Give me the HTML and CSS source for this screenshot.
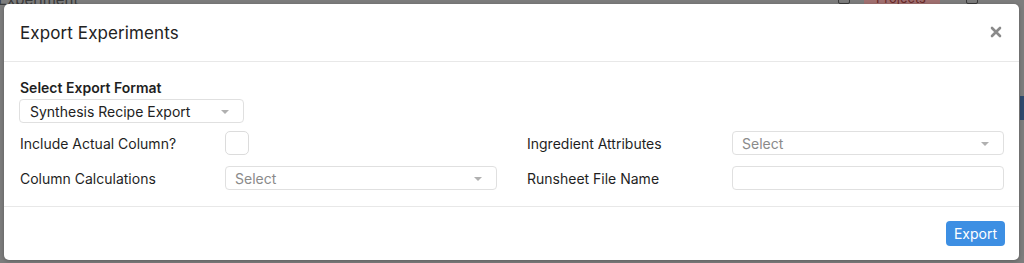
FILE: index.html
```html
<!DOCTYPE html>
<html lang="en">
<head>
    <meta charset="UTF-8">
    <title>Export Experiments</title>
    <link rel="stylesheet" href="styles.css">
</head>
<body>
    <!-- page behind the overlay -->
    <div class="page-bar">
        <span class="page-title">Experiment</span>
        <span class="page-icon icon-a"></span>
        <span class="page-badge">Projects</span>
        <span class="page-icon icon-b"></span>
    </div>
    <div class="page-strip"></div>

    <div class="overlay">
        <div class="modal">
            <div class="modal-header">
                <div class="modal-title">Export Experiments</div>
                <div class="modal-close">
                    <svg width="12" height="12" viewBox="0 0 12 12">
                        <path d="M2 2 L10 10 M10 2 L2 10" stroke="#8a8a8a" stroke-width="2.6" stroke-linecap="round"/>
                    </svg>
                </div>
            </div>

            <div class="modal-body">
                <div class="section-label">Select Export Format</div>
                <div class="select format-select">
                    <span class="select-value">Synthesis Recipe Export</span>
                    <span class="caret"></span>
                </div>

                <div class="form-grid">
                    <div class="form-row">
                        <div class="form-label">Include Actual Column?</div>
                        <div class="checkbox"></div>
                    </div>
                    <div class="form-row">
                        <div class="form-label">Ingredient Attributes</div>
                        <div class="select wide">
                            <span class="placeholder">Select</span>
                            <span class="caret"></span>
                        </div>
                    </div>
                    <div class="form-row">
                        <div class="form-label">Column Calculations</div>
                        <div class="select wide">
                            <span class="placeholder">Select</span>
                            <span class="caret"></span>
                        </div>
                    </div>
                    <div class="form-row">
                        <div class="form-label">Runsheet File Name</div>
                        <input class="text-input wide" type="text">
                    </div>
                </div>
            </div>

            <div class="modal-footer">
                <button class="export-button">Export</button>
            </div>
        </div>
    </div>
</body>
</html>
```

FILE: styles.css
```css
body {
    margin: 0;
    height: 263px;
    overflow: hidden;
    background-color: #7d7d7d;
    font-family: Inter, "Noto Sans", sans-serif;
    color: #1f1f1f;
    position: relative;
}

/* Page behind the modal (dimmed) */
.page-bar {
    position: absolute;
    top: -10px;
    left: 0;
    right: 0;
    height: 16px;
    font-size: 15px;
}
.page-title {
    position: absolute;
    left: -2px;
    top: 0;
    color: #3a3a3a;
}
.page-badge {
    position: absolute;
    left: 864px;
    top: 0;
    width: 76px;
    padding-left: 12px;
    box-sizing: border-box;
    background-color: #a07070;
    color: #6a2a2a;
    font-size: 13px;
    border-radius: 3px;
}
.page-icon {
    position: absolute;
    top: 2px;
    width: 10px;
    height: 10px;
    border: 1.5px solid #3a3a3a;
    border-radius: 2px;
}
.icon-a {
    left: 838px;
}
.icon-b {
    left: 966px;
}
.page-strip {
    position: absolute;
    left: 1020px;
    top: 96px;
    width: 10px;
    height: 24px;
    background-color: #304a6e;
}

.overlay {
    position: relative;
    padding: 4px 5px 0 4px;
}

.modal {
    background-color: #fff;
    border-radius: 5px;
    height: 256px;
    display: flex;
    flex-direction: column;
    box-shadow: 0 1px 4px rgba(0, 0, 0, 0.25);
}

.modal-header {
    height: 57px;
    padding: 0 16px;
    display: flex;
    align-items: center;
    justify-content: space-between;
    border-bottom: 1px solid #e8e8e8;
}
.modal-title {
    font-size: 17px;
    color: #222;
    letter-spacing: 0.1px;
}
.modal-close {
    display: flex;
    margin-right: 1px;
    margin-top: -2px;
}

.modal-body {
    padding: 16px 15px 16px;
    border-bottom: 1px solid #e8e8e8;
}
.section-label {
    font-size: 14px;
    font-weight: 600;
    line-height: 20px;
    margin-left: 1px;
}

.select {
    height: 24px;
    box-sizing: border-box;
    border: 1px solid #e0e0e0;
    border-radius: 4px;
    display: flex;
    align-items: center;
    justify-content: space-between;
    padding: 0 14px 0 10px;
    font-size: 14px;
}
.format-select {
    width: 225px;
    margin-top: 1px;
}
.select-value {
    color: #222;
}
.placeholder {
    color: #8a8a8a;
    margin-left: -1px;
}
.caret {
    width: 0;
    height: 0;
    border-left: 4px solid transparent;
    border-right: 4px solid transparent;
    border-top: 4px solid #b0b0b0;
    margin-top: 2px;
}

.form-grid {
    display: grid;
    grid-template-columns: 1fr 1fr;
    column-gap: 29px;
    row-gap: 11px;
    margin-top: 8px;
}
.form-row {
    display: flex;
    align-items: center;
    height: 24px;
}
.form-label {
    width: 205px;
    flex-shrink: 0;
    font-size: 14px;
    margin-left: 1px;
}
.checkbox {
    width: 24px;
    height: 24px;
    box-sizing: border-box;
    border: 1px solid #dcdcdc;
    border-radius: 5px;
}
.wide {
    flex: 1;
}
.text-input {
    height: 24px;
    box-sizing: border-box;
    border: 1px solid #e0e0e0;
    border-radius: 4px;
    margin: 0;
    padding: 0 10px;
    font-family: inherit;
    font-size: 14px;
    outline: none;
}

.modal-footer {
    flex: 1;
    display: flex;
    justify-content: flex-end;
    align-items: flex-start;
    padding: 14px 14px 0;
}
.export-button {
    background-color: #3d8fe3;
    color: #fff;
    border: none;
    border-radius: 4px;
    height: 25px;
    padding: 0 8px;
    font-family: inherit;
    font-size: 14px;
    cursor: pointer;
}
```
